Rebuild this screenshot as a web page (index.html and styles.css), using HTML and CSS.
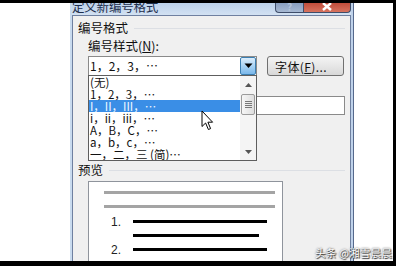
FILE: index.html
```html
<!DOCTYPE html>
<html lang="zh-CN">
<head>
  <meta charset="UTF-8">
  <meta name="viewport" content="width=device-width, initial-scale=1.0">
  <title>定义新编号格式</title>
  <link rel="stylesheet" href="styles.css">
</head>
<body>
  <div class="shot">
    <div class="edge-top"></div>
    <div class="stage">
      <div class="gutter"></div>

      <div class="dialog">
        <div class="titlebar">
          <span class="title">定义新编号格式</span>
          <div class="caption-btns">
            <span class="cap cap-help">?</span>
            <span class="cap cap-close">
              <svg width="12" height="9" viewBox="0 0 12 9"><path d="M2 1 L10 8 M10 1 L2 8" stroke="#fff" stroke-width="2.4"/></svg>
            </span>
          </div>
        </div>

        <div class="body">
          <div class="group-title"><span>编号格式</span><i class="rule"></i></div>
          <div class="label indent">编号样式(<u>N</u>):</div>

          <div class="combo-row indent">
            <div class="combo">
              <span class="combo-text">1，2，3，…</span>
              <span class="combo-arrow">
                <svg width="9" height="6" viewBox="0 0 9 6"><path d="M0.5 0.5 H8.5 L4.5 5 Z" fill="#000"/></svg>
              </span>

              <div class="dropdown">
                <div class="options">
                  <div class="opt">(无)</div>
                  <div class="opt">1，2，3，…</div>
                  <div class="opt selected">I，II，III，…</div>
                  <div class="opt">i，ii，iii，…</div>
                  <div class="opt">A，B，C，…</div>
                  <div class="opt">a，b，c，…</div>
                  <div class="opt">一，二，三 (简)…</div>
                </div>
                <div class="scrollbar">
                  <span class="sb-btn">
                    <svg width="7" height="4" viewBox="0 0 7 4"><path d="M0 4 L3.5 0 L7 4 Z" fill="#555"/></svg>
                  </span>
                  <span class="sb-thumb"><i></i><i></i><i></i><i></i></span>
                  <span class="sb-fill"></span>
                  <span class="sb-btn">
                    <svg width="7" height="4" viewBox="0 0 7 4"><path d="M0 0 L3.5 4 L7 0 Z" fill="#555"/></svg>
                  </span>
                </div>
              </div>
            </div>
            <button class="btn">字体(<u>F</u>)...</button>
          </div>

          <!-- fields hidden under the open list -->
          <div class="label indent"></div>
          <div class="input indent"></div>
          <div class="label indent gap"></div>
          <div class="combo small indent"></div>

          <div class="group-title preview-title"><span>预览</span><i class="rule"></i></div>
          <div class="preview indent">
            <div class="pv-line grey first"></div>
            <div class="pv-line grey"></div>
            <div class="pv-item first">
              <span class="pv-num">1.</span>
              <span class="pv-bar"></span>
            </div>
            <div class="pv-line black"></div>
            <div class="pv-item">
              <span class="pv-num">2.</span>
              <span class="pv-bar"></span>
            </div>
          </div>
        </div>
      </div>

      <div class="gutter-right"></div>
    </div>
    <div class="edge-bottom"></div>

    <svg class="cursor" width="13" height="21" viewBox="0 0 13 21">
      <path d="M1 1 L1 16.5 L4.6 13 L7.4 19.5 L9.6 18.6 L6.9 12.2 L11.6 12.2 Z" fill="#fff" stroke="#000" stroke-width="1" stroke-linejoin="round"/>
    </svg>
    <div class="watermark">头条 @湘雪晨晨</div>
  </div>
</body>
</html>
```

FILE: styles.css
```css
body {
  margin: 0;
  background: #fff;
  font-family: "Noto Sans CJK SC", "Liberation Sans", sans-serif;
  color: #111;
}
.shot {
  position: relative;
  width: 396px;
  height: 266px;
  overflow: hidden;
  display: flex;
  flex-direction: column;
}
.edge-top {
  height: 3px;
  background: #000;
  position: relative;
  z-index: 2;
}
.edge-bottom {
  height: 5px;
  background: #000;
  position: relative;
  z-index: 2;
}
.stage {
  display: flex;
  height: 258px;
  overflow: hidden;
}
.gutter {
  width: 70px;
  background: #fff;
}
.gutter-right {
  flex: 1;
  background: #fff;
  border-right: 3px solid #000;
}

/* dialog frame */
.dialog {
  width: 279px;
  padding: 0 2px;
  border-right: 1px solid #56698c;
  background: linear-gradient(90deg, #c9dbef, #bfd2ea);
  display: flex;
  flex-direction: column;
}
.titlebar {
  height: 19px;
  display: flex;
  justify-content: space-between;
  background: linear-gradient(#bcd1ea, #d2e1f2);
}
.title {
  font-size: 12.5px;
  line-height: 14px;
  margin-top: -3px;
  color: #1d2e4c;
  letter-spacing: -0.2px;
}
.caption-btns {
  display: flex;
  margin-top: -3px;
  position: relative;
  z-index: 3;
  height: 13px;
}
.cap {
  display: flex;
  align-items: center;
  justify-content: center;
  height: 13px;
  box-sizing: border-box;
  border: 1px solid #3e4d69;
  border-top: none;
  font-size: 10px;
  font-weight: bold;
}
.cap-help {
  width: 28px;
  border-radius: 0 0 0 4px;
  background: linear-gradient(#7e95b8, #a7b9d3);
  color: #b4c3da;
  border-right: none;
}
.cap-close {
  width: 48px;
  border-radius: 0 0 4px 0;
  background: linear-gradient(#b8402f, #d7735f);
}

.body {
  flex: 1;
  background: #f0f0f0;
  border: 1px solid #6f80a0;
  border-bottom: none;
  padding: 0 5px;
  font-size: 12px;
}
.indent {
  margin-left: 10px;
}
.group-title {
  display: flex;
  align-items: center;
  height: 16px;
  line-height: 16px;
  margin-top: 4px;
  font-size: 12.5px;
}
.group-title .rule {
  flex: 1;
  height: 1px;
  background: #dcdfe4;
  margin-left: 6px;
}
.preview-title {
  margin-top: 5px;
}
.label {
  height: 16px;
  line-height: 16px;
  margin-top: 2px;
  font-size: 12.5px;
}
.label.gap {
  margin-top: 4px;
}
.label u {
  text-decoration: underline;
}

/* combo box + font button */
.combo-row {
  display: flex;
  margin-top: 2px;
  height: 20px;
}
.combo {
  position: relative;
  width: 169px;
  height: 20px;
  box-sizing: border-box;
  border: 1px solid #8a8a8a;
  background: #fff;
  display: flex;
  align-items: center;
  justify-content: space-between;
}
.combo.small {
  width: 110px;
  margin-top: 2px;
}
.combo-text {
  padding-left: 1px;
  font-size: 12px;
  line-height: 16px;
}
.combo-arrow {
  width: 16px;
  height: 18px;
  box-sizing: border-box;
  border: 1px solid #3c7fb1;
  border-radius: 2px;
  background: linear-gradient(#dcedfb, #a9d3f4 50%, #7ab7ea);
  display: flex;
  align-items: center;
  justify-content: center;
}
.btn {
  margin-left: 10px;
  width: 77px;
  height: 20px;
  padding: 0 0 0 7px;
  text-align: left;
  border: 1px solid #707070;
  border-radius: 3px;
  background: linear-gradient(#f4f4f4, #e6e6e6 50%, #d8d8d8);
  font-family: inherit;
  font-size: 12px;
  color: #111;
  letter-spacing: 0.4px;
}

/* open list */
.dropdown {
  position: absolute;
  left: -1px;
  top: 100%;
  z-index: 5;
  width: 169px;
  height: 86px;
  box-sizing: border-box;
  border: 1px solid #5e5e5e;
  background: #fff;
  display: flex;
}
.options {
  flex: 1;
  overflow: hidden;
}
.opt {
  height: 12px;
  line-height: 12px;
  font-size: 11.5px;
  padding-left: 1px;
  white-space: nowrap;
  color: #111;
}
.opt.selected {
  background: #3a8ee6;
  color: #f2f8ff;
}
.scrollbar {
  width: 16px;
  background: #f4f4f4;
  display: flex;
  flex-direction: column;
  align-items: center;
}
.sb-btn {
  height: 17px;
  display: flex;
  align-items: center;
  justify-content: center;
}
.sb-thumb {
  width: 14px;
  height: 21px;
  margin-top: 1px;
  box-sizing: border-box;
  border: 1px solid #9b9b9b;
  border-radius: 2px;
  background: linear-gradient(90deg, #f6f6f6, #dedede);
  display: flex;
  flex-direction: column;
  align-items: center;
  justify-content: center;
  gap: 1px;
}
.sb-thumb i {
  width: 7px;
  height: 1px;
  background: #777;
}
.sb-fill {
  flex: 1;
}

.input {
  margin-top: 2px;
  height: 19px;
  box-sizing: border-box;
  border: 1px solid #8a8a8a;
  background: #fff;
}

/* preview */
.preview {
  margin-top: 3px;
  width: 195px;
  height: 80px;
  box-sizing: border-box;
  border: 1px solid #8f949c;
  border-bottom: none;
  background: #fff;
}
.pv-line {
  height: 3px;
}
.pv-line.grey {
  margin-left: 15px;
  width: 171px;
  margin-top: 11px;
  background: #a4a4a4;
}
.pv-line.grey.first {
  margin-top: 9px;
}
.pv-line.black {
  margin-left: 44px;
  width: 126px;
  margin-top: 11px;
  background: #000;
}
.pv-item {
  display: flex;
  align-items: center;
  height: 3px;
  margin-top: 11px;
}
.pv-item.first {
  margin-top: 12px;
}
.pv-num {
  width: 22px;
  margin-left: 22px;
  font-family: "Liberation Sans", sans-serif;
  font-size: 12px;
  line-height: 14px;
  color: #222;
}
.pv-bar {
  width: 134px;
  height: 3px;
  background: #000;
}

/* overlays */
.cursor {
  position: absolute;
  left: 201px;
  top: 110px;
  z-index: 6;
}
.watermark {
  position: absolute;
  left: 315px;
  top: 245px;
  z-index: 6;
  font-size: 10.5px;
  color: #fff;
  text-shadow: 0 0 2px #333, 1px 1px 1px #222;
  letter-spacing: 0.2px;
}
```
